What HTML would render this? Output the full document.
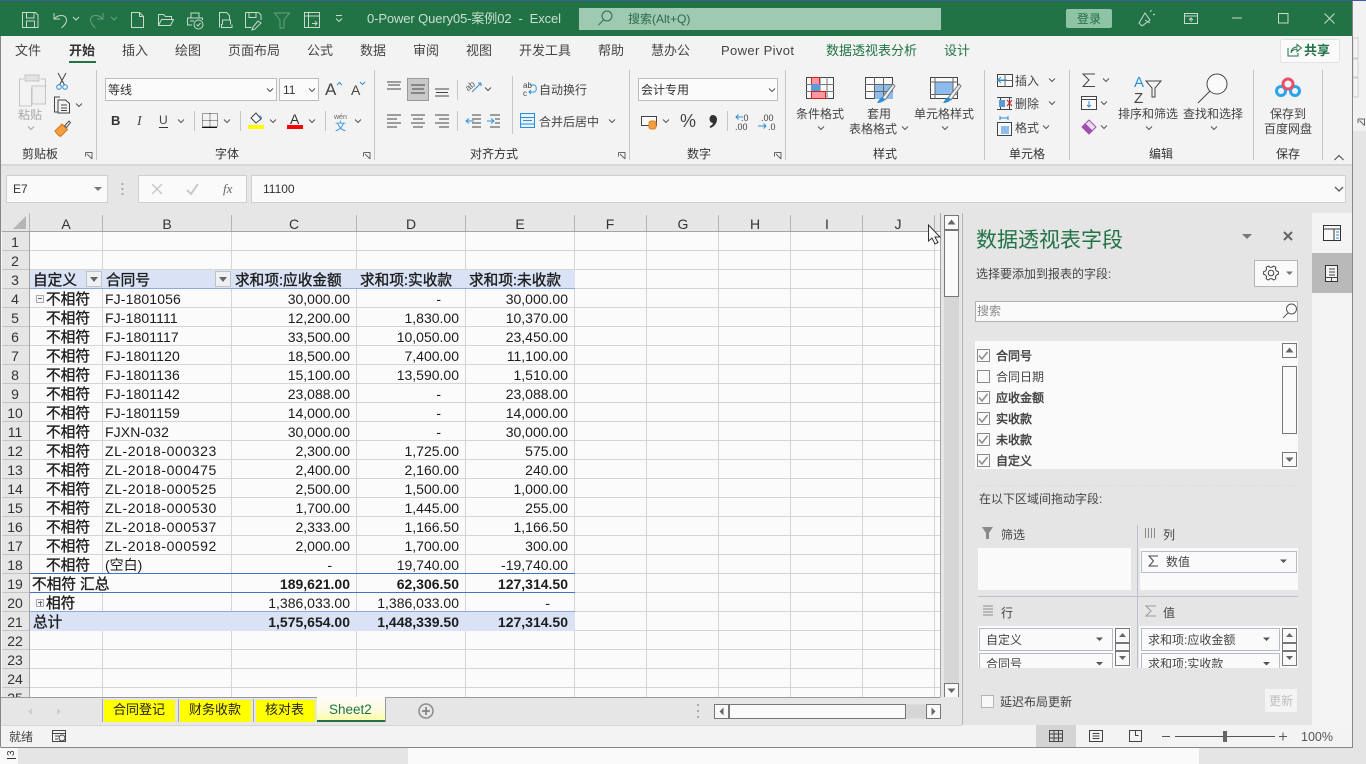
<!DOCTYPE html>
<html lang="zh-CN"><head><meta charset="utf-8"><title>Excel</title>
<style>
html,body{margin:0;padding:0;background:#fafafa}
body{width:1366px;height:764px;overflow:hidden;position:relative;font-family:"Liberation Sans","Noto Sans CJK SC",sans-serif}
svg.m{position:absolute;left:0;top:0}
svg text{font-family:"Liberation Sans","Noto Sans CJK SC",sans-serif;font-size:12px;fill:#444}
.s{fill:none;stroke:#444;stroke-width:1}
.t{fill:none;stroke:#c6dbce;stroke-width:1}
.td{fill:none;stroke:#67a084;stroke-width:1}
.rt{font-size:13px;fill:#444}
.rh{font-size:14px;fill:#333;text-anchor:middle}
.bd{stroke:#444;stroke-width:.45px}
table{position:absolute;left:30px;top:271px;border-collapse:separate;border-spacing:0;table-layout:fixed;width:545px;font-size:14px;color:#1c1c1c}
tr{height:19px}
td{height:19px;box-sizing:border-box;padding:0 7px 0 0;line-height:17px;vertical-align:bottom;text-align:right;white-space:nowrap;border-bottom:1px solid transparent;overflow:visible}
td.l{text-align:left;padding:0 0 0 2px}
td.a{text-align:left;padding:0 0 0 16px;font-size:14.67px;-webkit-text-stroke:.35px #1c1c1c;position:relative;top:1px}
td.z{font-size:14.67px;text-align:left;padding-left:3px;-webkit-text-stroke:.35px #1c1c1c;position:relative;top:1px}
td.d{padding-right:25px}
tr.b td{font-weight:bold}
tr.b td.z{font-weight:normal}
.zl{letter-spacing:.6px}
.fj{letter-spacing:.12px}
.fb{position:absolute;width:16px;height:16px;box-sizing:border-box;background:#eef0f4;border:1px solid #c2c2c2;top:271px}
.fb:after{content:"";position:absolute;left:3px;top:5px;border:4px solid transparent;border-top:5px solid #666;border-bottom:0}
.ex{position:absolute;left:36px;width:8px;height:8px;box-sizing:border-box;border:1px solid #a9a9b4;background:#f4f4f4}
.ex:after{content:"";position:absolute;left:1px;top:2px;width:4px;height:1px;background:#666}
.ex.p:before{content:"";position:absolute;left:2.5px;top:.5px;width:1px;height:5px;background:#666}
</style></head><body>
<svg class="m" width="1366" height="764" viewBox="0 0 1366 764" xmlns="http://www.w3.org/2000/svg">
<defs>
<path id="c" d="M-3 -1.500l3 3l3 -3" fill="none" stroke="#555" stroke-width="1"/>
<path id="ck" d="M-4 0l3 3.500l5.500 -7" fill="none" stroke="#8a8a8a" stroke-width="1.500"/>
<path id="ua" d="M-4 2.500h8l-4 -5z" fill="#666"/>
<path id="lc" d="M0 0h6.500v6.500M6.500 6.500l-5 -5M0 0v4M0 0h4" fill="none" stroke="#666"/>
<linearGradient id="g" x1="0" y1="0" x2="0" y2="1"><stop offset="0" stop-color="#fdfdf8"/><stop offset=".55" stop-color="#fbfbe0"/><stop offset="1" stop-color="#fdfda0"/></linearGradient>
</defs>

<!-- backgrounds -->
<rect x="0" y="0" width="1366" height="764" fill="#fafafa"/>
<rect x="1353" y="0" width="13" height="131" fill="#f3f2f2"/>
<rect x="1353" y="131" width="13" height="633" fill="#e5e5e5"/>
<rect x="1353" y="38" width="5" height="20" fill="#f5f5f5" stroke="#ccc"/>
<rect x="1353" y="59" width="5" height="18" fill="#f5f5f5" stroke="#ccc"/>
<rect x="1353" y="78" width="5" height="19" fill="#f5f5f5" stroke="#ccc"/>
<use href="#lc" x="1358" y="119"/>
<rect x="0" y="36" width="1353" height="129" fill="#f4f3f3"/>
<rect x="0" y="164" width="1353" height="2" fill="#d7d7d5"/>
<rect x="0" y="166" width="1353" height="66" fill="#e6e6e6"/>
<rect x="0" y="0" width="1353" height="36" fill="#217346"/>
<rect x="0" y="0" width="1366" height="1" fill="#3e5f9c"/>

<!-- title bar -->
<g class="t">
<path d="M22.500 12.500h13l2.500 2.500v12.500h-15.500zM26.500 12.500v5.500h7.500v-5.500M26.500 27.500v-6.500h8v6.500"/>
<path d="M54 13v6h6M54.500 19c3 -4.500 11 -5 12 .5c.5 3.500 -2.500 6 -5 8.500"/>
<path d="M73 17l3 3l3 -3"/>
<path d="M339.500 15.500h-6M333.500 18.500l3 3l3 -3" transform="translate(2.500,0)"/>
<path d="M131.500 12.500h8l4 4v11h-12zM139.500 12.500v4h4"/>
<path d="M158.500 25.500v-11h5l2 2h6v3M158.500 25.500l3 -6h12l-3 6z"/>
<path d="M191 18v-5h8v5M192 25h-4.500v-7h15v2M190 21h4"/><circle cx="198.500" cy="24.500" r="4.500"/><path d="M196.500 24.500l1.500 1.500l2.500 -3"/>
<path d="M219.500 27.500v-15h7l3 3v4M222.500 24.500v-4.500h8v4.500M222.500 24.500h-1v3h10.500v-3"/>
<path d="M245.500 12.500h13l2.500 2.500v5M245.500 12.500v15h6M249 12.500v5h7v-5M258 21l-5 6l-1 3l3 -1l6 -6z"/>
<rect x="304.500" y="12.500" width="15" height="15"/><path d="M304.500 16h15M308.500 12.500v15M312 23.500h5M315 21l2 2.500l-2 2"/>
<path d="M1139 23l6 -10l5 7l-8 6zM1145 20l5 3M1150 12l1.500 -2M1153 15l2 -1"/>
<rect x="1184.500" y="13.500" width="13" height="10"/><path d="M1184.500 16h13M1191 22v-4M1189 20l2 -2l2 2"/>
<path d="M1232 18h10M1324.500 13.500l10 10M1334.500 13.500l-10 10"/>
<rect x="1278.500" y="13.500" width="9.500" height="9.500"/>
</g>
<g class="td">
<path d="M103 13v6h-6M102.500 19c-3 -4.500 -11 -5 -12 .5c-.5 3.500 2.500 6 5 8.500M111 17l3 3l3 -3"/>
<path d="M274.500 13h15l-5.500 7v8h-4v-8z"/>
</g>
<text x="367" y="23" style="font-size:13px;fill:#cbdfd3;white-space:pre" textLength="194">0-Power Query05-案例02  -  Excel</text>
<rect x="579" y="8" width="362" height="22" fill="#9dcab0"/>
<circle cx="607" cy="16" r="5" fill="none" stroke="#2f6b4b"/><path d="M603.500 20l-5 5" stroke="#2f6b4b" fill="none"/>
<text x="628" y="23" style="fill:#2d6a49">搜索(Alt+Q)</text>
<rect x="1066" y="9" width="46" height="19" rx="2" fill="#8fc3a5"/>
<text x="1077" y="23" style="fill:#1f6b42">登录</text>

<!-- ribbon tabs -->
<g>
<text class="rt" x="15" y="55">文件</text>
<text class="rt" x="69" y="55" style="font-weight:bold;fill:#333">开始</text>
<text class="rt" x="122" y="55">插入</text>
<text class="rt" x="175" y="55">绘图</text>
<text class="rt" x="228" y="55">页面布局</text>
<text class="rt" x="307" y="55">公式</text>
<text class="rt" x="360" y="55">数据</text>
<text class="rt" x="413" y="55">审阅</text>
<text class="rt" x="466" y="55">视图</text>
<text class="rt" x="519" y="55">开发工具</text>
<text class="rt" x="598" y="55">帮助</text>
<text class="rt" x="651" y="55">慧办公</text>
<text class="rt" x="721" y="55" textLength="73">Power Pivot</text>
<text class="rt" x="826" y="55" style="fill:#217346">数据透视表分析</text>
<text class="rt" x="944" y="55" style="fill:#217346">设计</text>
</g>
<rect x="69" y="61" width="27" height="2" fill="#217346"/>
<rect x="1280.500" y="39.500" width="59" height="23" rx="2" fill="#fafafa" stroke="#e2e2e2"/>
<path d="M1288 48v8h10v-3M1291 53c0 -4 3 -6 6 -6v-2.500l4.500 3.500l-4.500 3.500v-2.500c-2 0 -4 1 -6 3" fill="none" stroke="#217346"/>
<text x="1304" y="55" style="font-size:13px;font-weight:bold;fill:#217346">共享</text>

<!-- separators -->
<g stroke="#c6c6c6" fill="none">
<path d="M96.500 70v90M374.500 70v90M629.500 70v90M785.500 70v90M984.500 70v90M1069.500 70v90M1253.500 70v90M1322.500 70v90"/>
<path d="M194.500 111v20M240.500 111v20M325.500 111v20M457.500 80v20M457.500 111v20M512.500 76v58M727.500 111v20"/>
</g>

<!-- clipboard -->
<g fill="none" stroke="#c4c4c4"><path d="M24 79h-4.500v27h12v-18h14v-9h-5"/><rect x="25" y="75" width="14" height="6" fill="#e2e2e2"/><rect x="32" y="86" width="13.500" height="18" fill="#efefef"/></g>
<text x="18" y="119" style="fill:#a8a8a8">粘贴</text><use href="#c" x="31" y="128" style="opacity:.5"/>
<g fill="none" stroke="#444"><path d="M58 73l6.500 12M66 73l-6.500 12"/></g><circle cx="59" cy="87" r="2.300" fill="none" stroke="#2b8fd6"/><circle cx="65" cy="87" r="2.300" fill="none" stroke="#2b8fd6"/>
<path d="M60 97h-5.500v15h3.500M58 100h7.500l4 3.500v9.500h-11.500zM61 105h6M61 108h6M61 110.500h6" class="s"/><use href="#c" x="79" y="105"/>
<path d="M55 131l7 -7l5.500 5.500l-7 7c-2 -1 -4 -3 -5.500 -5.500z" fill="#f0a040" stroke="#d5741a"/><path d="M64.500 126l4.500 -5l1.500 1.500l-4 5z" fill="#e8e8e8" stroke="#555"/>
<text x="22" y="158" style="fill:#333">剪贴板</text><use href="#lc" x="85.500" y="152.500"/>

<!-- font -->
<rect x="105.500" y="78.500" width="171" height="22" fill="#fbfbfb" stroke="#bdbdbd"/><text x="108" y="94" style="fill:#333">等线</text><use href="#c" x="270" y="90"/>
<rect x="279.500" y="78.500" width="39" height="22" fill="#fbfbfb" stroke="#bdbdbd"/><text x="283" y="94" style="fill:#333">11</text><use href="#c" x="312" y="90"/>
<text x="325" y="95" style="font-size:17px;fill:#444">A</text><path d="M337 85l2.500 -2.500l2.500 2.500" fill="none" stroke="#2b8fd6"/>
<text x="351" y="95" style="font-size:14px;fill:#444">A</text><path d="M360 82l2.500 2.500l2.500 -2.500" fill="none" stroke="#2b8fd6"/>
<text x="111" y="125" style="font-size:13px;font-weight:bold;fill:#333">B</text>
<text x="137" y="125" style="font-size:14px;font-style:italic;fill:#444;font-family:'Liberation Serif',serif">I</text>
<text x="159" y="124" style="font-size:12px;fill:#444">U</text><path d="M159 127.500h9" stroke="#333"/><use href="#c" x="181" y="121"/>
<path d="M202.500 113.500h15v13h-15zM210 113.500v13M202.500 120.500h15" fill="none" stroke="#444" stroke-dasharray="1 1"/><path d="M202 127.500h15" stroke="#111"/><use href="#c" x="227" y="121"/>
<path d="M251 118l5 -5l5 6l-5 4z" fill="#fafafa" stroke="#444"/><path d="M259 116c1.500 0 2.500 1 2.500 3" fill="none" stroke="#2b8fd6"/><rect x="248" y="125" width="16" height="4" fill="#ffff00"/><use href="#c" x="273" y="121"/>
<text x="290" y="124" style="font-size:14px;fill:#333">A</text><rect x="287" y="125" width="16" height="4" fill="#ff0000"/><use href="#c" x="312" y="121"/>
<text x="334" y="119" style="font-size:7px;fill:#666">wén</text><text x="335" y="130" style="font-size:11px;fill:#2b8fd6">文</text><use href="#c" x="358" y="121"/>
<text x="215" y="158" style="fill:#333">字体</text><use href="#lc" x="363.500" y="152.500"/>

<!-- align -->
<rect x="407.500" y="78.500" width="21" height="22" fill="#c9c9c9" stroke="#9a9a9a"/>
<g class="s">
<path d="M387 82h14M388 85h12M387 89h14"/>
<path d="M411 85h14M412 89h12M411 93h14"/>
<path d="M435 89h14M436 92.500h12M435 96h14"/>
<path d="M387 115h14M387 119h10M387 123h14M387 127h10"/>
<path d="M411 115h14M413 119h10M411 123h14M413 127h10"/>
<path d="M435 115h14M439 119h10M435 123h14M439 127h10"/>
<path d="M472 115h9M472 119h9M472 123h9M472 127h9M490 115h10M490 127h10M495 119h5M495 123h5"/>
</g>
<path d="M474 121h-8M469 118.500l-3 2.500l3 2.500M487 121h7M491 118.500l3 2.500l-3 2.500" fill="none" stroke="#2b8fd6"/>
<text x="465" y="89" style="font-size:9px;fill:#555" transform="rotate(-40 470 86)">ab</text><path d="M472 92l9 -9M481 83h-3M481 83v3" fill="none" stroke="#2b8fd6"/><use href="#c" x="488" y="89"/>
<text x="523" y="88" style="font-size:8px;fill:#444">ab</text><text x="523" y="96" style="font-size:8px;fill:#444">c</text><path d="M530 85h4c3 0 3 7 0 7h-5M531 90l-2 2l2 2" fill="none" stroke="#2b8fd6"/>
<text x="539" y="94">自动换行</text>
<rect x="520.500" y="113.500" width="14" height="14" fill="#e8f2fb" stroke="#2b8fd6"/><path d="M520.500 117.500h14M520.500 124h14M523 120.500h9" fill="none" stroke="#2b8fd6"/>
<text x="539" y="126">合并后居中</text><use href="#c" x="612" y="121"/>
<text x="470" y="158" style="fill:#333">对齐方式</text><use href="#lc" x="618.500" y="152.500"/>

<!-- number -->
<rect x="638.500" y="78.500" width="139" height="22" fill="#fbfbfb" stroke="#bdbdbd"/><text x="641" y="94" style="fill:#333">会计专用</text><use href="#c" x="772" y="90"/>
<rect x="641.500" y="116.500" width="15" height="9" fill="#fafafa" stroke="#444"/><rect x="649" y="121" width="7" height="8" rx="2" fill="#f0a040" stroke="#e08020"/><use href="#c" x="666" y="121"/>
<text x="680" y="127" style="font-size:18px;fill:#444">%</text>
<path d="M712.500 115c3 0 4.500 2 4.500 4.500c0 4 -3 7 -6.500 8.500l-1 -1.500c2 -1 3.500 -2.500 3.500 -3.500c-2 0 -3.500 -2 -3.500 -4c0 -2 1.500 -4 3 -4z" fill="#333"/>
<text x="741" y="121" style="font-size:9px">.0</text><text x="735" y="130" style="font-size:9px">.00</text><path d="M743 117h-7M738.500 114.500l-2.500 2.500l2.500 2.500" fill="none" stroke="#2b8fd6"/>
<text x="761" y="121" style="font-size:9px">.00</text><text x="768" y="130" style="font-size:9px">.0</text><path d="M758 126h8M763.500 123.500l2.500 2.500l-2.500 2.500" fill="none" stroke="#2b8fd6"/>
<text x="687" y="158" style="fill:#333">数字</text><use href="#lc" x="774.500" y="152.500"/>

<!-- styles -->
<rect x="806.500" y="77.500" width="27" height="21" fill="#fafafa" stroke="#444"/>
<path d="M806 84.500h28M806 91.500h28M813 77v22M820 77v22M827 77v22" stroke="#777" fill="none"/>
<rect x="811.500" y="77.500" width="8" height="7" fill="#f8979f" stroke="#d42020"/><rect x="811.500" y="84.500" width="8" height="7" fill="#5b9bd5" stroke="#5b9bd5"/><rect x="811.500" y="91.500" width="14" height="7" fill="#f8979f" stroke="#d42020"/>
<text x="796" y="118">条件格式</text><use href="#c" x="821" y="128"/>
<rect x="865.500" y="77.500" width="27" height="21" fill="#fafafa" stroke="#444"/><rect x="874" y="84" width="19" height="15" fill="#8dbdec"/>
<path d="M865 84.500h28M865 91.500h28M874.500 77v22M883.500 77v22" stroke="#666" fill="none"/>
<path d="M893 84l-11 14l3 2l10 -14z" fill="#eee" stroke="#777"/><path d="M882 97c-2 1 -3 3 -5 6c3 0 7 -1 8 -4z" fill="#2b8fd6"/>
<text x="867" y="118">套用</text><text x="849" y="133">表格格式</text><use href="#c" x="905" y="128"/>
<rect x="930.500" y="77.500" width="27" height="21" fill="#fafafa" stroke="#444"/><rect x="935" y="82" width="18" height="12" fill="#8dbdec"/>
<path d="M930 82h28M930 94.500h28M935 77v22M953 77v22" stroke="#666" fill="none"/>
<path d="M959 84l-11 14l3 2l10 -14z" fill="#eee" stroke="#777"/><path d="M948 97c-2 1 -3 3 -5 6c3 0 7 -1 8 -4z" fill="#2b8fd6"/>
<text x="914" y="118">单元格样式</text><use href="#c" x="945" y="128"/>
<text x="873" y="158" style="fill:#333">样式</text>

<!-- cells -->
<rect x="997.500" y="74.500" width="15" height="12" fill="#fafafa" stroke="#444"/><path d="M1005 74v13M997 80.500h15" stroke="#666"/><path d="M1007 80h-9M1001 77l-3 3l3 3" fill="none" stroke="#2b8fd6"/>
<text x="1015" y="85">插入</text><use href="#c" x="1052" y="80"/>
<path d="M997 97.500h15M997 109.500h15M1000.500 97v13M1009.500 97v13" stroke="#444" fill="none"/><rect x="999" y="100" width="6" height="7" fill="#5b9bd5"/><path d="M1007 100l5 6M1012 100l-5 6" stroke="#d42020"/>
<text x="1015" y="108">删除</text><use href="#c" x="1052" y="103"/>
<rect x="997.500" y="122.500" width="14" height="13" fill="#fafafa" stroke="#444"/><rect x="1001" y="126" width="8" height="8" fill="#8dbdec"/><path d="M1000 118h8M1000 116v4M1008 116v4" stroke="#2b8fd6" fill="none"/>
<text x="1015" y="132">格式</text><use href="#c" x="1046" y="127"/>
<text x="1009" y="158" style="fill:#333">单元格</text>

<!-- editing -->
<path d="M1095 74h-12l6 6l-6 6.500h12" class="s"/><use href="#c" x="1106" y="80"/>
<rect x="1081.500" y="96.500" width="15" height="13" fill="#fafafa" stroke="#444"/><path d="M1081 99.500h16" stroke="#444"/><path d="M1089 101v6M1087 105l2 2l2 -2" fill="none" stroke="#2b8fd6"/><use href="#c" x="1104" y="103"/>
<path d="M1082 127l7 -7l7 7l-7 7z" fill="#eadcf0" stroke="#a050b0"/><path d="M1082 127l3.500 -3.500l7 7l-3.500 3.500z" fill="#a050b0"/><use href="#c" x="1104" y="127"/>
<text x="1134" y="87" style="font-size:15px;fill:#2b8fd6">A</text><text x="1134" y="103" style="font-size:15px;fill:#444">Z</text>
<path d="M1146 81h15l-6 7v9h-3v-9z" class="s"/>
<text x="1118" y="118">排序和筛选</text><use href="#c" x="1149" y="128"/>
<circle cx="1217" cy="84" r="10" fill="#fafafa" stroke="#444"/><path d="M1210 91l-12 12" class="s"/>
<text x="1183" y="118">查找和选择</text><use href="#c" x="1214" y="128"/>
<text x="1149" y="158" style="fill:#333">编辑</text>

<!-- baidu -->
<circle cx="1281" cy="91" r="4.500" fill="none" stroke="#2aa4ea" stroke-width="3"/><circle cx="1295" cy="91" r="4.500" fill="none" stroke="#2aa4ea" stroke-width="3"/><circle cx="1288" cy="84" r="5" fill="none" stroke="#e8506a" stroke-width="3"/>
<text x="1270" y="118">保存到</text><text x="1264" y="133">百度网盘</text>
<text x="1276" y="158" style="fill:#333">保存</text>
<path d="M1334.500 160l4.500 -4.500l4.500 4.500" class="s"/>

<!-- formula bar -->
<rect x="6.500" y="175.500" width="101" height="27" fill="#fafafa" stroke="#cfcfcf"/><text x="13" y="193" style="fill:#333">E7</text><path d="M94 187h8l-4 4z" fill="#777"/>
<path d="M122.500 183v2M122.500 188v2M122.500 193v2" stroke="#aaa" stroke-width="2" fill="none"/>
<rect x="138.500" y="175.500" width="108" height="27" fill="#fafafa" stroke="#cfcfcf"/>
<path d="M152 184l10 10M162 184l-10 10" stroke="#c9c9c9" stroke-width="1.500"/><path d="M187 190l4 4l7 -10" stroke="#c9c9c9" stroke-width="2" fill="none"/>
<text x="223" y="193" style="font-family:'Liberation Serif',serif;font-style:italic;font-size:13px;fill:#666">fx</text>
<rect x="251.500" y="175.500" width="1094" height="27" fill="#fafafa" stroke="#cfcfcf"/><text x="263" y="193" style="fill:#333">11100</text><path d="M1335 187l4 4l4 -4" fill="none" stroke="#666" stroke-width="1.500"/>

<!-- grid -->
<rect x="2" y="213" width="938" height="19" fill="#e6e6e6"/>
<rect x="2" y="232" width="28" height="465" fill="#e6e6e6"/>
<rect x="30" y="232" width="910" height="465" fill="#fbfbfb"/>
<path d="M26 216v13h-13z" fill="#b5b5b5"/>
<g stroke="#d5d6cd" fill="none">
<path d="M30 250.500h910M30 269.500h910M30 288.500h910M30 307.500h910M30 326.500h910M30 345.500h910M30 364.500h910M30 383.500h910M30 402.500h910M30 421.500h910M30 440.500h910M30 459.500h910M30 478.500h910M30 497.500h910M30 516.500h910M30 535.500h910M30 554.500h910M30 573.500h910M30 592.500h910M30 611.500h910M30 630.500h910M30 649.500h910M30 668.500h910M30 687.500h910"/>
<path d="M102.500 232v465M231.500 232v465M356.500 232v465M465.500 232v465M574.500 232v465M646.500 232v465M718.500 232v465M790.500 232v465M862.500 232v465M934.500 232v465"/>
</g>
<!-- pivot fills and borders -->
<rect x="30" y="270" width="545" height="18" fill="#d9e3f5"/>
<path d="M30 288.500h545" stroke="#8ea9db"/>
<rect x="99" y="574" width="6" height="18" fill="#fbfbfb"/>
<path d="M30 573.500h545M30 592.500h545" stroke="#4472c4"/>
<rect x="30" y="612" width="545" height="19" fill="#d9e3f5"/>
<path d="M30 611.500h545" stroke="#8ea9db"/>
<g stroke="#c4c4c4" fill="none">
<path d="M2 250.500h28M2 269.500h28M2 288.500h28M2 307.500h28M2 326.500h28M2 345.500h28M2 364.500h28M2 383.500h28M2 402.500h28M2 421.500h28M2 440.500h28M2 459.500h28M2 478.500h28M2 497.500h28M2 516.500h28M2 535.500h28M2 554.500h28M2 573.500h28M2 592.500h28M2 611.500h28M2 630.500h28M2 649.500h28M2 668.500h28M2 687.500h28"/>
</g>
<g stroke="#b4b4b4" fill="none"><path d="M29.500 213v19M102.500 215v17M231.500 215v17M356.500 215v17M465.500 215v17M574.500 215v17M646.500 215v17M718.500 215v17M790.500 215v17M862.500 215v17M934.500 215v17"/></g>
<path d="M2 231.500h938M29.500 232v465" stroke="#a5a5a5" fill="none"/>
<g>
<text class="rh" x="66" y="229">A</text><text class="rh" x="167" y="229">B</text><text class="rh" x="294" y="229">C</text><text class="rh" x="411" y="229">D</text><text class="rh" x="520" y="229">E</text><text class="rh" x="610" y="229">F</text><text class="rh" x="683" y="229">G</text><text class="rh" x="755" y="229">H</text><text class="rh" x="827" y="229">I</text><text class="rh" x="898" y="229">J</text>
<text class="rh" x="15" y="247">1</text><text class="rh" x="15" y="266">2</text><text class="rh" x="15" y="285">3</text><text class="rh" x="15" y="304">4</text><text class="rh" x="15" y="323">5</text><text class="rh" x="15" y="342">6</text><text class="rh" x="15" y="361">7</text><text class="rh" x="15" y="380">8</text><text class="rh" x="15" y="399">9</text><text class="rh" x="15" y="418">10</text><text class="rh" x="15" y="437">11</text><text class="rh" x="15" y="456">12</text><text class="rh" x="15" y="475">13</text><text class="rh" x="15" y="494">14</text><text class="rh" x="15" y="513">15</text><text class="rh" x="15" y="532">16</text><text class="rh" x="15" y="551">17</text><text class="rh" x="15" y="570">18</text><text class="rh" x="15" y="589">19</text><text class="rh" x="15" y="608">20</text><text class="rh" x="15" y="627">21</text><text class="rh" x="15" y="646">22</text><text class="rh" x="15" y="665">23</text><text class="rh" x="15" y="684">24</text><text class="rh" x="15" y="703">25</text>
</g>

<!-- vertical scrollbar -->
<rect x="940" y="213" width="23" height="512" fill="#e6e6e6"/>
<path d="M940.500 213v484" stroke="#a5a5a5"/>
<rect x="944" y="230" width="15" height="467" fill="#d6d6d6"/>
<rect x="944.500" y="215.500" width="14" height="14" fill="#fafafa" stroke="#777"/><use href="#ua" x="951.500" y="222"/>
<rect x="944.500" y="230.500" width="14" height="66" fill="#fafafa" stroke="#777"/>
<rect x="944.500" y="683.500" width="14" height="14" fill="#fafafa" stroke="#777"/><path d="M947.500 688.500h8l-4 4.500z" fill="#666"/>

<!-- sheet tabs -->
<rect x="1" y="697" width="962" height="28" fill="#e6e6e6"/>
<path d="M1 697.500h939" stroke="#9a9a9a"/>
<path d="M32 708l-4 3.500l4 3.500zM57 708l4 3.500l-4 3.500z" fill="#cfcfcf"/>
<path d="M102.500 699v23M178.500 699v23M253.500 699v23" stroke="#a5a5a5"/>
<rect x="104" y="700" width="71" height="22" fill="#ffff00"/><rect x="180" y="700" width="71" height="22" fill="#ffff00"/><rect x="256" y="700" width="59" height="22" fill="#ffff00"/>
<text x="113" y="714" style="font-size:13px;fill:#222">合同登记</text><text x="189" y="714" style="font-size:13px;fill:#222">财务收款</text><text x="265" y="714" style="font-size:13px;fill:#222">核对表</text>
<rect x="317" y="697" width="68" height="24" fill="url(#g)"/><path d="M385.500 697v25" stroke="#9a9a9a"/><rect x="317" y="720" width="68" height="2" fill="#217346"/>
<text x="329" y="714" style="font-size:13.500px;fill:#217346">Sheet2</text>
<circle cx="426" cy="711" r="7" fill="none" stroke="#8c8c8c" stroke-width="1.500"/><path d="M422 711h8M426 707v8" stroke="#777" stroke-width="1.500"/>
<path d="M698 704v2M698 710v2M698 716v2" stroke="#aaa" stroke-width="2"/>
<rect x="714.500" y="704.500" width="212" height="14" fill="#d6d6d6" stroke="none"/>
<rect x="714.500" y="704.500" width="14" height="14" fill="#fafafa" stroke="#777"/><path d="M723.500 707.500v8l-4 -4z" fill="#666"/>
<rect x="729.500" y="704.500" width="176" height="14" fill="#fafafa" stroke="#777"/>
<rect x="926.500" y="704.500" width="14" height="14" fill="#fafafa" stroke="#777"/><path d="M931.500 707.500v8l4 -4z" fill="#666"/>

<!-- cursor -->
<path d="M928.500 225v16l3.500 -3l3 6l3 -1.500l-3 -5.500h5z" fill="#fafafa" stroke="#333"/>

<!-- pivot panel -->
<rect x="963" y="213" width="349" height="512" fill="#e5e5e5"/>
<path d="M962.500 213v512" stroke="#b5b5b5"/>
<rect x="1312" y="213" width="40" height="512" fill="#f5f4f4"/>
<rect x="1312" y="253" width="40" height="40" fill="#b9b9b9"/>
<rect x="1323.500" y="225.500" width="17" height="15" fill="#fafafa" stroke="#333"/><path d="M1323 229h18M1334 229v11" stroke="#333"/><path d="M1336 232h3M1336 235h3M1336 238h3" stroke="#2b8fd6"/>
<rect x="1325.500" y="265.500" width="12" height="16" fill="#f3f3f3" stroke="#333"/><path d="M1329 269h6M1329 272h6M1329 275h6M1325 277.500h13M1331.500 277v4" stroke="#444"/>
<text x="976" y="247" style="font-size:21px;fill:#217346">数据透视表字段</text>
<path d="M1242 234h10l-5 5z" fill="#777"/>
<path d="M1284 232l8 8M1292 232l-8 8" stroke="#666" stroke-width="2"/>
<text x="976" y="278" style="fill:#444">选择要添加到报表的字段:</text>
<rect x="1254.500" y="260.500" width="43" height="26" fill="#fafafa" stroke="#b5b5b5"/>
<polygon transform="translate(1271,273)" fill="none" stroke="#444" points="5.45,-1.98 7.39,-1.3 7.39,1.3 5.45,1.98 4.44,3.73 4.82,5.75 2.57,7.05 1.01,5.71 -1.01,5.71 -2.57,7.05 -4.82,5.75 -4.44,3.73 -5.45,1.98 -7.39,1.3 -7.39,-1.3 -5.45,-1.98 -4.44,-3.73 -4.82,-5.75 -2.57,-7.05 -1.01,-5.71 1.01,-5.71 2.57,-7.05 4.82,-5.75 4.44,-3.73"/>
<circle cx="1271" cy="273" r="2.800" fill="none" stroke="#444"/>
<path d="M1286 271.500h7l-3.500 3.500z" fill="#777"/>
<rect x="975.500" y="301.500" width="322" height="20" fill="#fafafa" stroke="#b0b0b0"/><text x="977" y="315" style="fill:#8a8a8a">搜索</text>
<circle cx="1291.500" cy="309" r="5" fill="none" stroke="#555"/><path d="M1288 313l-5 5" stroke="#555" fill="none"/>
<rect x="975" y="341" width="323" height="128" fill="#fafafa"/>
<g fill="#fafafa" stroke="#8a8a8a"><rect x="977.500" y="349.500" width="12" height="12"/><rect x="977.500" y="370.500" width="12" height="12"/><rect x="977.500" y="391.500" width="12" height="12"/><rect x="977.500" y="412.500" width="12" height="12"/><rect x="977.500" y="433.500" width="12" height="12"/><rect x="977.500" y="454.500" width="12" height="12"/></g>
<use href="#ck" x="983" y="355.500"/><use href="#ck" x="983" y="397.500"/><use href="#ck" x="983" y="418.500"/><use href="#ck" x="983" y="439.500"/><use href="#ck" x="983" y="460.500"/>
<text class="bd" x="996" y="360">合同号</text><text class="bd" x="996" y="402">应收金额</text><text class="bd" x="996" y="423">实收款</text><text class="bd" x="996" y="444">未收款</text><text class="bd" x="996" y="465">自定义</text>
<text x="996" y="381">合同日期</text>
<rect x="1282.500" y="343.500" width="14" height="14" fill="#fafafa" stroke="#777"/><use href="#ua" x="1289.500" y="350"/>
<rect x="1282.500" y="366.500" width="14" height="67" fill="#fafafa" stroke="#777"/>
<rect x="1282.500" y="452.500" width="14" height="14" fill="#fafafa" stroke="#777"/><path d="M1285.500 457.500h8l-4 4.500z" fill="#666"/>
<path d="M976 485.500h322" stroke="#d5d5d5" stroke-dasharray="1 2"/>
<text x="979" y="503" style="fill:#444">在以下区域间拖动字段:</text>
<path d="M982 527h11l-4 6v6h-3v-6z" fill="#8a8a8a"/><text x="1001" y="539">筛选</text>
<path d="M1145.500 528v10M1148.500 528v10M1151.500 528v10M1154.500 528v10" stroke="#8a8a8a" fill="none"/><text x="1163" y="539">列</text>
<rect x="978" y="548" width="153" height="42" fill="#fafafa"/><rect x="1140" y="548" width="158" height="42" fill="#fafafa"/>
<rect x="1141.500" y="551.500" width="155" height="21" fill="#fafafa" stroke="#b7bbc8"/>
<path d="M1158 556h-9l4.500 5l-4.500 5h9" fill="none" stroke="#444"/><text x="1166" y="566">数值</text><path d="M1280 559.500h7l-3.500 3.500z" fill="#555"/>
<path d="M1137.500 525v143" stroke="#bcc0cb"/><path d="M978 596.500h320" stroke="#bcc0cb"/>
<path d="M983 606h10M983 609h10M983 612h10M983 615h10" stroke="#8a8a8a"/><text x="1001" y="617">行</text>
<path d="M1156 606h-10l5 5l-5 5h10" fill="none" stroke="#9a9a9a"/><text x="1163" y="617">值</text>
<rect x="978" y="626" width="153" height="42" fill="#fafafa"/><rect x="1139" y="626" width="159" height="42" fill="#fafafa"/>
<svg x="978" y="626" width="320" height="42" viewBox="978 626 320 42">
<rect x="979.500" y="628.500" width="133" height="22" fill="#fafafa" stroke="#b7bbc8"/><rect x="979.500" y="653.500" width="133" height="22" fill="#fafafa" stroke="#b7bbc8"/>
<text x="986" y="644">自定义</text><text x="986" y="668">合同号</text>
<path d="M1096 637.500h7l-3.500 3.500zM1096 662h7l-3.500 3.500z" fill="#555"/>
<rect x="1115.500" y="628.500" width="14" height="14" fill="#fafafa" stroke="#777"/><rect x="1115.500" y="643.500" width="14" height="7" fill="#fafafa" stroke="#777"/><rect x="1115.500" y="651.500" width="14" height="14" fill="#fafafa" stroke="#777"/>
<path d="M1119 637h7l-3.500 -4zM1119 656h7l-3.500 4z" fill="#666"/>
<rect x="1141.500" y="628.500" width="138" height="22" fill="#fafafa" stroke="#b7bbc8"/><rect x="1141.500" y="653.500" width="138" height="22" fill="#fafafa" stroke="#b7bbc8"/>
<text x="1148" y="644">求和项:应收金额</text><text x="1148" y="668">求和项:实收款</text>
<path d="M1263 637.500h7l-3.500 3.500zM1263 662h7l-3.500 3.500z" fill="#555"/>
<rect x="1282.500" y="628.500" width="14" height="14" fill="#fafafa" stroke="#777"/><rect x="1282.500" y="643.500" width="14" height="7" fill="#fafafa" stroke="#777"/><rect x="1282.500" y="651.500" width="14" height="14" fill="#fafafa" stroke="#777"/>
<path d="M1286 637h7l-3.500 -4zM1286 656h7l-3.500 4z" fill="#666"/>
</svg>
<rect x="981.500" y="695.500" width="12" height="12" fill="#f8f8f8" stroke="#b5b5b5"/><text x="1000" y="706">延迟布局更新</text>
<rect x="1265" y="689" width="32" height="23" fill="#f4f4f4"/><text x="1269" y="705" style="fill:#bdbdbd">更新</text>

<!-- status bar -->
<rect x="1" y="725" width="1351" height="22" fill="#f4f3f3"/>
<path d="M1 725.500h961" stroke="#d5d5d5"/>
<text x="9" y="741" style="fill:#444">就绪</text>
<rect x="52.500" y="730.500" width="13" height="11" fill="none" stroke="#444"/><path d="M52 733.500h13M55 736h4M55 739h3" stroke="#444"/><circle cx="62" cy="738" r="3" fill="#f4f3f3" stroke="#444"/>
<rect x="1036" y="725" width="40" height="22" fill="#d4d4d4"/>
<path d="M1049.500 730.500h13v11h-13zM1049.500 734h13M1049.500 738h13M1054 730.500v11M1058.500 730.500v11" fill="none" stroke="#444"/>
<rect x="1089.500" y="730.500" width="13" height="11" fill="none" stroke="#444"/><path d="M1092.500 733.500h7M1092.500 736h7M1092.500 738.500h7" stroke="#444"/>
<path d="M1129.500 730.500h12v11h-12zM1135.500 730.500v5h3" fill="none" stroke="#444"/>
<path d="M1162 736.500h8M1175 736.500h100M1279 736.500h8M1283 732.500v8" stroke="#555" fill="none"/>
<rect x="1223" y="731" width="4" height="11" fill="#666"/>
<text x="1301" y="741" style="font-size:12.500px;fill:#555">100%</text>

<!-- window borders -->
<path d="M.5 36v711M.5 747.500h1352M1352.500 1v747" stroke="#868686" fill="none"/>
<rect x="18" y="748" width="390" height="16" fill="#e5e5e5"/>
<rect x="1199" y="748" width="167" height="16" fill="#e5e5e5"/>
<text x="7" y="755" style="font-size:10px;fill:#333" transform="rotate(-90 11 752)">3</text>
<path d="M7 758.500h9" stroke="#333"/>
</svg>

<table>
<colgroup><col style="width:73px"><col style="width:129px"><col style="width:125px"><col style="width:109px"><col style="width:109px"></colgroup>
<tr><td class="z">自定义</td><td class="z">合同号</td><td class="z">求和项:应收金额</td><td class="z">求和项:实收款</td><td class="z">求和项:未收款</td></tr>
<tr><td class="a">不相符</td><td class="l fj">FJ-1801056</td><td>30,000.00</td><td class="d">-</td><td>30,000.00</td></tr>
<tr><td class="a">不相符</td><td class="l fj">FJ-1801111</td><td>12,200.00</td><td>1,830.00</td><td>10,370.00</td></tr>
<tr><td class="a">不相符</td><td class="l fj">FJ-1801117</td><td>33,500.00</td><td>10,050.00</td><td>23,450.00</td></tr>
<tr><td class="a">不相符</td><td class="l fj">FJ-1801120</td><td>18,500.00</td><td>7,400.00</td><td>11,100.00</td></tr>
<tr><td class="a">不相符</td><td class="l fj">FJ-1801136</td><td>15,100.00</td><td>13,590.00</td><td>1,510.00</td></tr>
<tr><td class="a">不相符</td><td class="l fj">FJ-1801142</td><td>23,088.00</td><td class="d">-</td><td>23,088.00</td></tr>
<tr><td class="a">不相符</td><td class="l fj">FJ-1801159</td><td>14,000.00</td><td class="d">-</td><td>14,000.00</td></tr>
<tr><td class="a">不相符</td><td class="l fj">FJXN-032</td><td>30,000.00</td><td class="d">-</td><td>30,000.00</td></tr>
<tr><td class="a">不相符</td><td class="l zl">ZL-2018-000323</td><td>2,300.00</td><td>1,725.00</td><td>575.00</td></tr>
<tr><td class="a">不相符</td><td class="l zl">ZL-2018-000475</td><td>2,400.00</td><td>2,160.00</td><td>240.00</td></tr>
<tr><td class="a">不相符</td><td class="l zl">ZL-2018-000525</td><td>2,500.00</td><td>1,500.00</td><td>1,000.00</td></tr>
<tr><td class="a">不相符</td><td class="l zl">ZL-2018-000530</td><td>1,700.00</td><td>1,445.00</td><td>255.00</td></tr>
<tr><td class="a">不相符</td><td class="l zl">ZL-2018-000537</td><td>2,333.00</td><td>1,166.50</td><td>1,166.50</td></tr>
<tr><td class="a">不相符</td><td class="l zl">ZL-2018-000592</td><td>2,000.00</td><td>1,700.00</td><td>300.00</td></tr>
<tr><td class="a">不相符</td><td class="l">(空白)</td><td class="d">-</td><td>19,740.00</td><td>-19,740.00</td></tr>
<tr class="b"><td class="z" colspan="2" style="padding-left:2px">不相符 汇总</td><td>189,621.00</td><td>62,306.50</td><td>127,314.50</td></tr>
<tr><td class="a">相符</td><td></td><td>1,386,033.00</td><td>1,386,033.00</td><td class="d">-</td></tr>
<tr class="b"><td class="z" colspan="2">总计</td><td>1,575,654.00</td><td>1,448,339.50</td><td>127,314.50</td></tr>
</table>
<div class="fb" style="left:86px"></div>
<div class="fb" style="left:215px"></div>
<div class="ex" style="top:295px"></div>
<div class="ex p" style="top:599px"></div>
</body></html>
